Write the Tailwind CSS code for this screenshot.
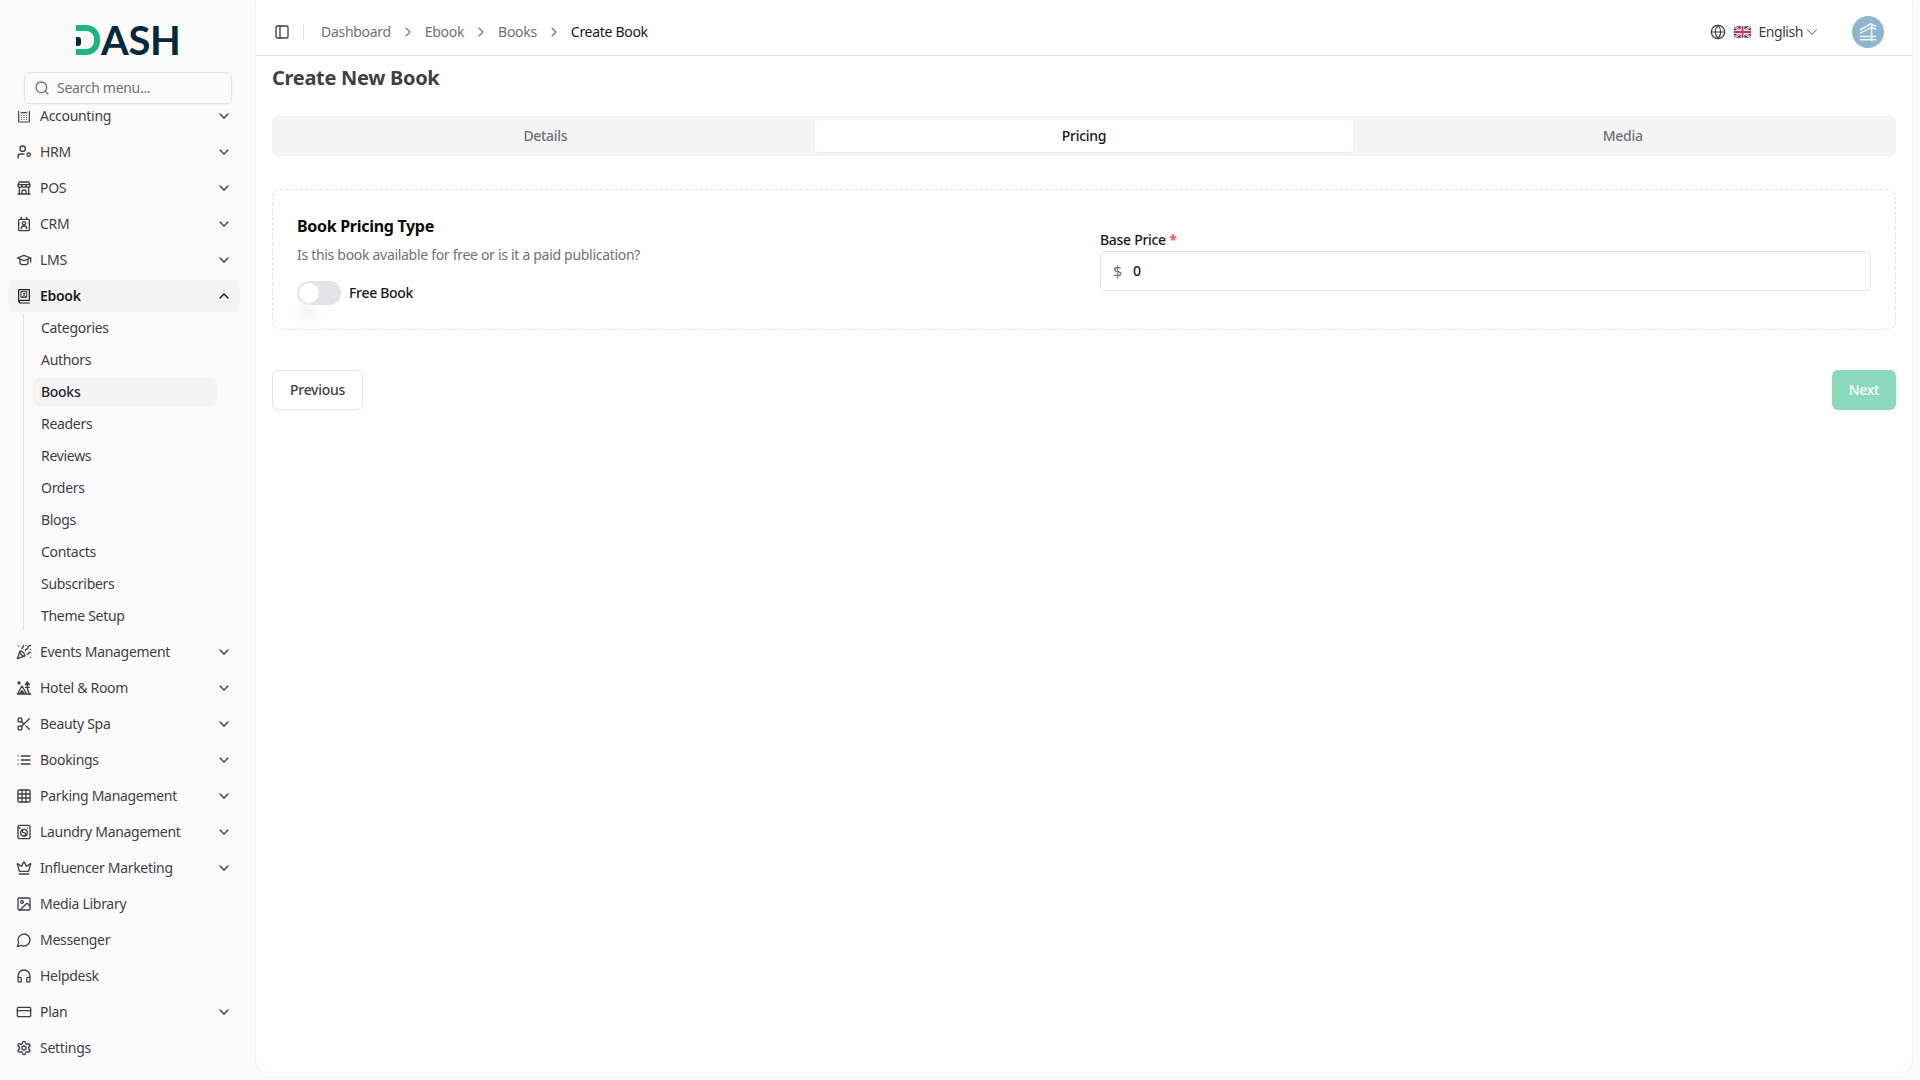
<!DOCTYPE html>
<html lang="en">
<head>
<meta charset="UTF-8">
<title>Create New Book</title>
<script src="https://cdn.jsdelivr.net/npm/@tailwindcss/browser@4"></script>
</head>
<body class="bg-[#fbfbfb] font-['Noto_Sans',sans-serif] text-sm tracking-[-0.3px] text-[#3f3f46] h-[1080px] overflow-hidden">
<div class="flex h-[1080px]">
  <!-- sidebar -->
  <aside class="w-[256px] shrink-0 flex flex-col h-[1080px]">
    <div class="h-[72px] flex items-start pt-[25px] pl-[76px] shrink-0">
      <div class="flex items-center h-[30px]">
        <div class="relative w-[24px] h-[30px] border-[6px] border-l-0 border-[#1db57f] rounded-r-[14px]">
          <span class="absolute left-0 top-[6px] w-[5px] h-[9px] rounded-r-[3px] bg-[#06283d]"></span>
        </div>
        <span class="ml-[1px] font-['Lato',sans-serif] font-bold text-[40px] leading-[30px] text-[#06283d] tracking-[-0.4px]">ASH</span>
      </div>
    </div>
    <div class="mx-[24px] w-[208px] h-[32px] border border-[#e4e4e7] rounded-md flex items-center pl-[9px] gap-[7px] shrink-0 shadow-xs">
      <svg class="size-4 text-[#71717a]" viewBox="0 0 24 24" fill="none" stroke="currentColor" stroke-width="2" stroke-linecap="round" stroke-linejoin="round"><circle cx="11" cy="11" r="8"/><path d="m21 21-4.3-4.3"/></svg>
      <span class="text-[#71717a] text-sm">Search menu...</span>
    </div>
    <nav class="mt-[7px] flex-1 overflow-hidden pl-[8px] w-[240px]">
      <ul class="-mt-[11px] flex flex-col gap-1">
        <li class="h-8 flex items-center pl-[8px] pr-[8px] gap-[8px]">
          <svg class="size-4" viewBox="0 0 24 24" fill="none" stroke="currentColor" stroke-width="1.8" stroke-linecap="round" stroke-linejoin="round"><rect x="4" y="3" width="16" height="18" rx="1"/><path d="M8 7h8M8 11h.01M12 11h.01M16 11h.01M8 14h.01M12 14h.01M16 14h.01M8 17h.01M12 17h.01M16 17h.01"/></svg>
          <span class="flex-1">Accounting</span>
          <svg class="size-4" viewBox="0 0 24 24" fill="none" stroke="currentColor" stroke-width="2" stroke-linecap="round" stroke-linejoin="round"><path d="m6 9 6 6 6-6"/></svg>
        </li>
        <li class="h-8 flex items-center pl-[8px] pr-[8px] gap-[8px]">
          <svg class="size-4" viewBox="0 0 24 24" fill="none" stroke="currentColor" stroke-width="2" stroke-linecap="round" stroke-linejoin="round"><circle cx="10" cy="7" r="4"/><path d="M3 21v-2a4 4 0 0 1 4-4h5"/><circle cx="19" cy="16" r="2.5"/></svg>
          <span class="flex-1">HRM</span>
          <svg class="size-4" viewBox="0 0 24 24" fill="none" stroke="currentColor" stroke-width="2" stroke-linecap="round" stroke-linejoin="round"><path d="m6 9 6 6 6-6"/></svg>
        </li>
        <li class="h-8 flex items-center pl-[8px] pr-[8px] gap-[8px]">
          <svg class="size-4" viewBox="0 0 24 24" fill="none" stroke="currentColor" stroke-width="2" stroke-linecap="round" stroke-linejoin="round"><path d="M3 21h18M3 7v1a3 3 0 0 0 6 0V7m0 1a3 3 0 0 0 6 0V7m0 1a3 3 0 0 0 6 0V7H3l2-4h14l2 4M5 21V10.85M19 21V10.85M9 21v-4a2 2 0 0 1 2-2h2a2 2 0 0 1 2 2v4"/></svg>
          <span class="flex-1">POS</span>
          <svg class="size-4" viewBox="0 0 24 24" fill="none" stroke="currentColor" stroke-width="2" stroke-linecap="round" stroke-linejoin="round"><path d="m6 9 6 6 6-6"/></svg>
        </li>
        <li class="h-8 flex items-center pl-[8px] pr-[8px] gap-[8px]">
          <svg class="size-4" viewBox="0 0 24 24" fill="none" stroke="currentColor" stroke-width="2" stroke-linecap="round" stroke-linejoin="round"><rect x="4" y="5" width="16" height="17" rx="1.5"/><path d="M8 2v3M16 2v3"/><circle cx="12" cy="11" r="2.5"/><path d="M8 19a4 4 0 0 1 8 0"/></svg>
          <span class="flex-1">CRM</span>
          <svg class="size-4" viewBox="0 0 24 24" fill="none" stroke="currentColor" stroke-width="2" stroke-linecap="round" stroke-linejoin="round"><path d="m6 9 6 6 6-6"/></svg>
        </li>
        <li class="h-8 flex items-center pl-[8px] pr-[8px] gap-[8px]">
          <svg class="size-4" viewBox="0 0 24 24" fill="none" stroke="currentColor" stroke-width="2" stroke-linecap="round" stroke-linejoin="round"><path d="M22 9 12 5 2 9l10 4 10-4v6"/><path d="M6 10.6V16a6 3 0 0 0 12 0v-5.4"/></svg>
          <span class="flex-1">LMS</span>
          <svg class="size-4" viewBox="0 0 24 24" fill="none" stroke="currentColor" stroke-width="2" stroke-linecap="round" stroke-linejoin="round"><path d="m6 9 6 6 6-6"/></svg>
        </li>
        <li class="h-8 flex items-center pl-[8px] pr-[8px] gap-[8px] bg-[#f4f4f5] rounded-md text-[#18181b] font-semibold">
          <svg class="size-4" viewBox="0 0 24 24" fill="none" stroke="currentColor" stroke-width="1.8" stroke-linecap="round" stroke-linejoin="round"><path d="M4 20V3.5a1 1 0 0 1 1-1h15v16H6.5a2 2 0 0 0 0 4H20"/><rect x="8" y="5.5" width="8" height="8.5" stroke-width="1.4"/><circle cx="12" cy="8.7" r="1" stroke-width="1.2"/><path d="M9.8 13.5a2.2 2.2 0 0 1 4.4 0" stroke-width="1.2"/></svg>
          <span class="flex-1">Ebook</span>
          <svg class="size-4" viewBox="0 0 24 24" fill="none" stroke="currentColor" stroke-width="2" stroke-linecap="round" stroke-linejoin="round"><path d="m18 15-6-6-6 6"/></svg>
        </li>
      </ul>
      <ul class="ml-[15px] mt-[2px] mb-[6px] w-[194px] border-l border-[#e4e4e7] pl-[9px] flex flex-col gap-1">
        <li class="h-7 flex items-center px-[8px] rounded-md">Categories</li>
        <li class="h-7 flex items-center px-[8px] rounded-md">Authors</li>
        <li class="h-7 flex items-center px-[8px] rounded-md bg-[#f4f4f5] text-[#27272a] font-medium">Books</li>
        <li class="h-7 flex items-center px-[8px] rounded-md">Readers</li>
        <li class="h-7 flex items-center px-[8px] rounded-md">Reviews</li>
        <li class="h-7 flex items-center px-[8px] rounded-md">Orders</li>
        <li class="h-7 flex items-center px-[8px] rounded-md">Blogs</li>
        <li class="h-7 flex items-center px-[8px] rounded-md">Contacts</li>
        <li class="h-7 flex items-center px-[8px] rounded-md">Subscribers</li>
        <li class="h-7 flex items-center px-[8px] rounded-md">Theme Setup</li>
      </ul>
      <ul class="flex flex-col gap-1">
        <li class="h-8 flex items-center pl-[8px] pr-[8px] gap-[8px]">
          <svg class="size-4" viewBox="0 0 24 24" fill="none" stroke="currentColor" stroke-width="2" stroke-linecap="round" stroke-linejoin="round"><path d="M5.8 11.3 2 22l10.7-3.79"/><path d="M4 3h.01M22 8h.01M15 2h.01M22 20h.01"/><path d="m22 2-2.24.75a2.9 2.9 0 0 0-1.96 3.12c.1.86-.57 1.63-1.45 1.63h-.38c-.86 0-1.6.6-1.76 1.44L14 10"/><path d="m22 13-.82-.33c-.86-.34-1.82.2-1.98 1.11c-.11.7-.72 1.22-1.43 1.22H17"/><path d="m11 2 .33.82c.34.86-.2 1.82-1.11 1.98C9.52 4.9 9 5.52 9 6.23V7"/><path d="M11 13c1.93 1.93 2.83 4.17 2 5-.83.83-3.07-.07-5-2-1.93-1.93-2.83-4.17-2-5 .83-.83 3.07.07 5 2Z"/></svg>
          <span class="flex-1">Events Management</span>
          <svg class="size-4" viewBox="0 0 24 24" fill="none" stroke="currentColor" stroke-width="2" stroke-linecap="round" stroke-linejoin="round"><path d="m6 9 6 6 6-6"/></svg>
        </li>
        <li class="h-8 flex items-center pl-[8px] pr-[8px] gap-[8px]">
          <svg class="size-4" viewBox="0 0 24 24" fill="none" stroke="currentColor" stroke-width="2" stroke-linecap="round" stroke-linejoin="round"><circle cx="4.5" cy="4.5" r="1.5"/><path d="M2 21 9 9l7 12M2 21h20M9 21v-5M5 21l4-5 4 5"/><path d="M17 3l-3 4h6l-3-4zM17 7v6M14 11h6M17 13l3 8"/></svg>
          <span class="flex-1">Hotel &amp; Room</span>
          <svg class="size-4" viewBox="0 0 24 24" fill="none" stroke="currentColor" stroke-width="2" stroke-linecap="round" stroke-linejoin="round"><path d="m6 9 6 6 6-6"/></svg>
        </li>
        <li class="h-8 flex items-center pl-[8px] pr-[8px] gap-[8px]">
          <svg class="size-4" viewBox="0 0 24 24" fill="none" stroke="currentColor" stroke-width="2" stroke-linecap="round" stroke-linejoin="round"><circle cx="6" cy="6" r="3"/><path d="M8.12 8.12 12 12"/><path d="M20 4 8.12 15.88"/><circle cx="6" cy="18" r="3"/><path d="M14.8 14.8 20 20"/></svg>
          <span class="flex-1">Beauty Spa</span>
          <svg class="size-4" viewBox="0 0 24 24" fill="none" stroke="currentColor" stroke-width="2" stroke-linecap="round" stroke-linejoin="round"><path d="m6 9 6 6 6-6"/></svg>
        </li>
        <li class="h-8 flex items-center pl-[8px] pr-[8px] gap-[8px]">
          <svg class="size-4" viewBox="0 0 24 24" fill="none" stroke="currentColor" stroke-width="2" stroke-linecap="round" stroke-linejoin="round"><path d="M8 6h13M8 12h13M8 18h13M3 6h.01M3 12h.01M3 18h.01"/></svg>
          <span class="flex-1">Bookings</span>
          <svg class="size-4" viewBox="0 0 24 24" fill="none" stroke="currentColor" stroke-width="2" stroke-linecap="round" stroke-linejoin="round"><path d="m6 9 6 6 6-6"/></svg>
        </li>
        <li class="h-8 flex items-center pl-[8px] pr-[8px] gap-[8px]">
          <svg class="size-4" viewBox="0 0 24 24" fill="none" stroke="currentColor" stroke-width="2" stroke-linecap="round" stroke-linejoin="round"><rect x="3" y="3" width="18" height="18" rx="2"/><path d="M3 9h18M3 15h18M9 3v18M15 3v18"/></svg>
          <span class="flex-1">Parking Management</span>
          <svg class="size-4" viewBox="0 0 24 24" fill="none" stroke="currentColor" stroke-width="2" stroke-linecap="round" stroke-linejoin="round"><path d="m6 9 6 6 6-6"/></svg>
        </li>
        <li class="h-8 flex items-center pl-[8px] pr-[8px] gap-[8px]">
          <svg class="size-4" viewBox="0 0 24 24" fill="none" stroke="currentColor" stroke-width="2" stroke-linecap="round" stroke-linejoin="round"><rect x="3" y="2" width="18" height="20" rx="2"/><path d="M3 6h3M17 6h.01"/><circle cx="12" cy="13" r="5"/><path d="M12 18a2.5 2.5 0 0 0 0-5 2.5 2.5 0 0 1 0-5"/></svg>
          <span class="flex-1">Laundry Management</span>
          <svg class="size-4" viewBox="0 0 24 24" fill="none" stroke="currentColor" stroke-width="2" stroke-linecap="round" stroke-linejoin="round"><path d="m6 9 6 6 6-6"/></svg>
        </li>
        <li class="h-8 flex items-center pl-[8px] pr-[8px] gap-[8px]">
          <svg class="size-4" viewBox="0 0 24 24" fill="none" stroke="currentColor" stroke-width="2" stroke-linecap="round" stroke-linejoin="round"><path d="M11.562 3.266a.5.5 0 0 1 .876 0L15.39 8.87a1 1 0 0 0 1.516.294L21.183 5.5a.5.5 0 0 1 .798.519l-2.834 10.246a1 1 0 0 1-.956.734H5.81a1 1 0 0 1-.957-.734L2.02 6.02a.5.5 0 0 1 .798-.519l4.276 3.664a1 1 0 0 0 1.516-.294z"/><path d="M5 21h14"/></svg>
          <span class="flex-1">Influencer Marketing</span>
          <svg class="size-4" viewBox="0 0 24 24" fill="none" stroke="currentColor" stroke-width="2" stroke-linecap="round" stroke-linejoin="round"><path d="m6 9 6 6 6-6"/></svg>
        </li>
        <li class="h-8 flex items-center pl-[8px] pr-[8px] gap-[8px]">
          <svg class="size-4" viewBox="0 0 24 24" fill="none" stroke="currentColor" stroke-width="2" stroke-linecap="round" stroke-linejoin="round"><rect x="3" y="3" width="18" height="18" rx="2"/><circle cx="9" cy="9" r="2"/><path d="m21 15-3.086-3.086a2 2 0 0 0-2.828 0L6 21"/></svg>
          <span class="flex-1">Media Library</span>
        </li>
        <li class="h-8 flex items-center pl-[8px] pr-[8px] gap-[8px]">
          <svg class="size-4" viewBox="0 0 24 24" fill="none" stroke="currentColor" stroke-width="2" stroke-linecap="round" stroke-linejoin="round"><path d="M7.9 20A9 9 0 1 0 4 16.1L2 22Z"/></svg>
          <span class="flex-1">Messenger</span>
        </li>
        <li class="h-8 flex items-center pl-[8px] pr-[8px] gap-[8px]">
          <svg class="size-4" viewBox="0 0 24 24" fill="none" stroke="currentColor" stroke-width="2" stroke-linecap="round" stroke-linejoin="round"><path d="M3 14h3a2 2 0 0 1 2 2v3a2 2 0 0 1-2 2H5a2 2 0 0 1-2-2v-7a9 9 0 0 1 18 0v7a2 2 0 0 1-2 2h-1a2 2 0 0 1-2-2v-3a2 2 0 0 1 2-2h3"/></svg>
          <span class="flex-1">Helpdesk</span>
        </li>
        <li class="h-8 flex items-center pl-[8px] pr-[8px] gap-[8px]">
          <svg class="size-4" viewBox="0 0 24 24" fill="none" stroke="currentColor" stroke-width="2" stroke-linecap="round" stroke-linejoin="round"><rect x="2" y="5" width="20" height="14" rx="2"/><path d="M2 10h20"/></svg>
          <span class="flex-1">Plan</span>
          <svg class="size-4" viewBox="0 0 24 24" fill="none" stroke="currentColor" stroke-width="2" stroke-linecap="round" stroke-linejoin="round"><path d="m6 9 6 6 6-6"/></svg>
        </li>
        <li class="h-8 flex items-center pl-[8px] pr-[8px] gap-[8px]">
          <svg class="size-4" viewBox="0 0 24 24" fill="none" stroke="currentColor" stroke-width="2" stroke-linecap="round" stroke-linejoin="round"><path d="M12.22 2h-.44a2 2 0 0 0-2 2v.18a2 2 0 0 1-1 1.73l-.43.25a2 2 0 0 1-2 0l-.15-.08a2 2 0 0 0-2.73.73l-.22.38a2 2 0 0 0 .73 2.73l.15.1a2 2 0 0 1 1 1.72v.51a2 2 0 0 1-1 1.74l-.15.09a2 2 0 0 0-.73 2.73l.22.38a2 2 0 0 0 2.73.73l.15-.08a2 2 0 0 1 2 0l.43.25a2 2 0 0 1 1 1.73V20a2 2 0 0 0 2 2h.44a2 2 0 0 0 2-2v-.18a2 2 0 0 1 1-1.73l.43-.25a2 2 0 0 1 2 0l.15.08a2 2 0 0 0 2.73-.73l.22-.39a2 2 0 0 0-.73-2.73l-.15-.08a2 2 0 0 1-1-1.74v-.5a2 2 0 0 1 1-1.74l.15-.09a2 2 0 0 0 .73-2.73l-.22-.38a2 2 0 0 0-2.73-.73l-.15.08a2 2 0 0 1-2 0l-.43-.25a2 2 0 0 1-1-1.73V4a2 2 0 0 0-2-2z"/><circle cx="12" cy="12" r="3"/></svg>
          <span class="flex-1">Settings</span>
        </li>
      </ul>
    </nav>
  </aside>

  <!-- main panel -->
  <main class="w-[1656px] h-[1072px] bg-white rounded-b-xl shadow-[0_0_3px_rgba(0,0,0,0.08)]">
    <header class="h-[56px] border-b border-[#e4e4e7] flex items-center pt-[8px] pl-[18px] pr-[28px]">
      <svg class="size-4 text-[#3f3f46]" viewBox="0 0 24 24" fill="none" stroke="currentColor" stroke-width="2" stroke-linecap="round" stroke-linejoin="round"><rect x="3" y="3" width="18" height="18" rx="2"/><path d="M9 3v18"/></svg>
      <div class="w-px h-4 bg-[#e4e4e7] ml-[13px] mr-[17px]"></div>
      <nav class="flex items-center text-[#71717a]">
        <span>Dashboard</span>
        <svg class="size-4 mx-[9px]" viewBox="0 0 24 24" fill="none" stroke="currentColor" stroke-width="1.6" stroke-linecap="round" stroke-linejoin="round"><path d="m9 18 6-6-6-6"/></svg>
        <span>Ebook</span>
        <svg class="size-4 mx-[9px]" viewBox="0 0 24 24" fill="none" stroke="currentColor" stroke-width="1.6" stroke-linecap="round" stroke-linejoin="round"><path d="m9 18 6-6-6-6"/></svg>
        <span>Books</span>
        <svg class="size-4 mx-[9px]" viewBox="0 0 24 24" fill="none" stroke="currentColor" stroke-width="1.6" stroke-linecap="round" stroke-linejoin="round"><path d="m9 18 6-6-6-6"/></svg>
        <span class="text-[#18181b]">Create Book</span>
      </nav>
      <div class="ml-auto flex items-center">
        <svg class="size-4 text-[#3f3f46]" viewBox="0 0 24 24" fill="none" stroke="currentColor" stroke-width="1.8" stroke-linecap="round" stroke-linejoin="round"><circle cx="12" cy="12" r="10"/><path d="M12 2a14.5 14.5 0 0 0 0 20 14.5 14.5 0 0 0 0-20"/><path d="M2 12h20"/></svg>
        <svg class="w-[17px] h-[12px] ml-[8px] rounded-[2px]" viewBox="0 0 60 40"><rect width="60" height="40" fill="#22357a"/><path d="M0 0 60 40M60 0 0 40" stroke="#fff" stroke-width="8"/><path d="M0 0 60 40M60 0 0 40" stroke="#d0314b" stroke-width="3"/><path d="M30 0v40M0 20h60" stroke="#fff" stroke-width="13"/><path d="M30 0v40M0 20h60" stroke="#d0314b" stroke-width="7"/></svg>
        <span class="ml-[8px] text-[#3f3f46] tracking-[-0.45px]">English</span>
        <svg class="size-[18px] text-[#71717a]" viewBox="0 0 24 24" fill="none" stroke="currentColor" stroke-width="1.4" stroke-linecap="round" stroke-linejoin="round"><path d="m6 9 6 6 6-6"/></svg>
        <div class="ml-[31px] size-8 rounded-full bg-[#8fb6cf] flex items-center justify-center">
          <svg class="size-[22px]" viewBox="0 0 24 24" fill="none" stroke="#e8f1f6" stroke-width="1.7"><path d="M3 10 15 3l6 3M3 13.5 16 7l5 2M3 17h18M3 20.5h18M16 3v19"/></svg>
        </div>
      </div>
    </header>
    <div class="px-[16px] pb-[16px]">
      <h1 class="text-[20px] leading-[28px] font-bold text-[#3f3f46] mt-[8px]">Create New Book</h1>
      <div class="mt-[24px] h-[40px] bg-[#f4f4f5] rounded-md p-[4px] grid grid-cols-3 text-center font-medium text-[#71717a]">
        <div class="flex items-center justify-center">Details</div>
        <div class="flex items-center justify-center bg-white rounded-[4px] text-[#18181b] shadow-xs">Pricing</div>
        <div class="flex items-center justify-center">Media</div>
      </div>
      <section class="mt-[33px] h-[141px] border border-dashed border-[#e4e4e7] rounded-lg pl-[24px] pr-[24px] grid grid-cols-[803px_1fr]">
        <div class="pt-[24px]">
          <h2 class="text-base leading-[24px] font-bold text-[#09090b]">Book Pricing Type</h2>
          <p class="mt-[7px] leading-[20px] text-[#71717a]">Is this book available for free or is it a paid publication?</p>
          <div class="relative mt-[16px] flex items-center gap-[8px]">
            <div class="w-[44px] h-[24px] rounded-full bg-[#e4e4e7] p-[2px]">
              <div class="size-5 rounded-full bg-white"></div>
            </div>
            <div class="absolute left-[1px] top-[25px] w-[18px] h-[12px] bg-[#f4f4f5] blur-[4px]"></div>
            <span class="font-medium text-[#18181b]">Free Book</span>
          </div>
        </div>
        <div class="pt-[40px]">
          <label class="block font-medium text-[#18181b] leading-[20px]">Base Price <span class="text-[#ef4444]">*</span></label>
          <div class="mt-[1px] h-[40px] border border-[#e4e4e7] rounded-md flex items-center pl-[12px]">
            <span class="text-[#71717a] text-base w-[20px]">$</span>
            <span class="text-[#18181b] font-medium">0</span>
          </div>
        </div>
      </section>
      <div class="mt-[40px] flex justify-between">
        <button class="h-[40px] w-[91px] border border-[#e4e4e7] rounded-md bg-white font-medium text-[#3f3f46]">Previous</button>
        <button class="h-[40px] w-[64px] rounded-md bg-[#8ad9bb] font-medium text-white">Next</button>
      </div>
    </div>
  </main>
</div>
</body>
</html>
